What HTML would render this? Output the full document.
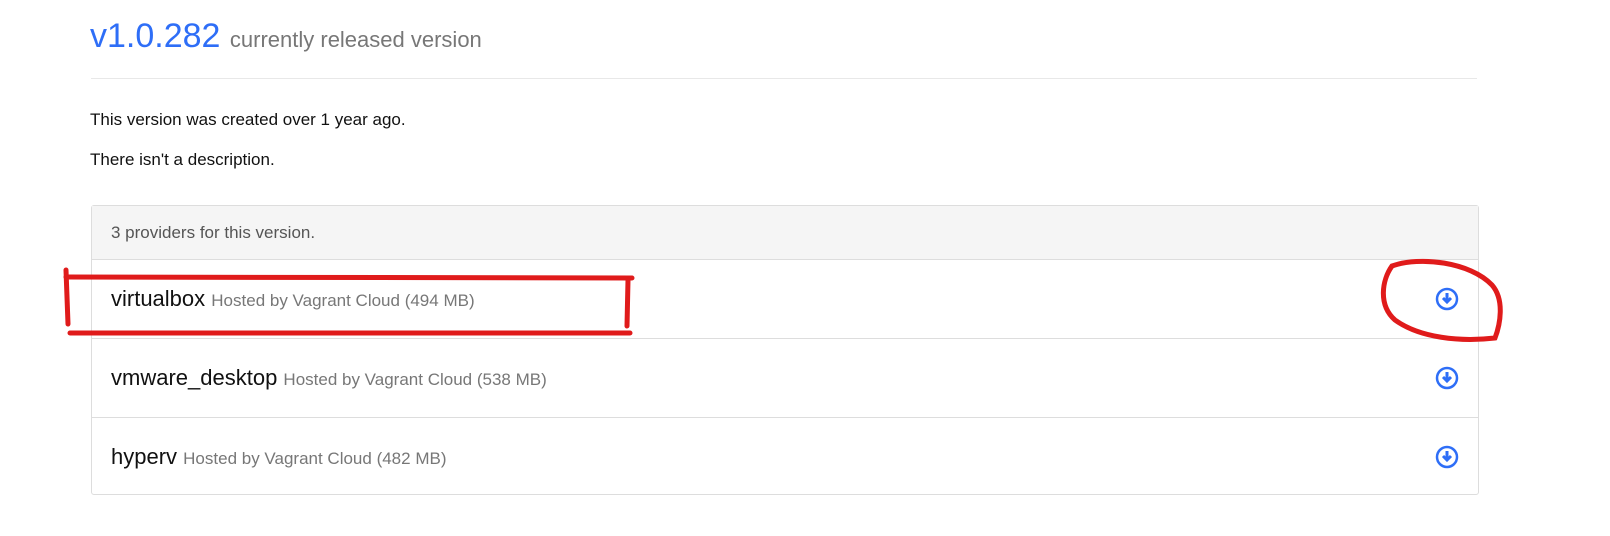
<!DOCTYPE html>
<html><head><style>
body{margin:0;width:1610px;height:536px;background:#fff;font-family:"Liberation Sans",sans-serif;position:relative;overflow:hidden}
.a{position:absolute;white-space:nowrap}
.panel{position:absolute;left:91px;top:205px;width:1386px;height:288px;border:1px solid #ddd;border-radius:3px}
.hd{height:53px;background:#f5f5f5;border-bottom:1px solid #ddd;color:#555;font-size:17px;line-height:53px;padding-left:19px}
.row{height:78px;border-bottom:1px solid #ddd;position:relative;padding-left:19px;line-height:78px;font-size:22px;color:#111}
.row:last-child{border-bottom:none}
.row span{font-size:17px;color:#777}
.row svg{position:absolute;right:19px;top:27px}
</style></head><body>
<div class="a" style="left:90px;top:17px;font-size:34px;color:#2e6ef7">v1.0.282 <span style="font-size:22px;color:#777">currently released version</span></div>
<div class="a" style="left:91px;top:78px;width:1386px;border-top:1px solid #e8e8e8"></div>
<div class="a" style="left:90px;top:110px;font-size:17px;color:#111">This version was created over 1 year ago.</div>
<div class="a" style="left:90px;top:150px;font-size:17px;color:#111">There isn't a description.</div>
<div class="panel">
<div class="hd">3 providers for this version.</div>
<div class="row">virtualbox <span>Hosted by Vagrant Cloud (494 MB)</span><svg width="24" height="24" viewBox="0 0 24 24"><circle cx="12" cy="12" r="10" fill="none" stroke="#2e6ef7" stroke-width="2.5"/><path d="M12 6v7M8 11l4 4 4-4" fill="none" stroke="#2e6ef7" stroke-width="3"/></svg></div>
<div class="row">vmware_desktop <span>Hosted by Vagrant Cloud (538 MB)</span><svg width="24" height="24" viewBox="0 0 24 24"><circle cx="12" cy="12" r="10" fill="none" stroke="#2e6ef7" stroke-width="2.5"/><path d="M12 6v7M8 11l4 4 4-4" fill="none" stroke="#2e6ef7" stroke-width="3"/></svg></div>
<div class="row">hyperv <span>Hosted by Vagrant Cloud (482 MB)</span><svg width="24" height="24" viewBox="0 0 24 24"><circle cx="12" cy="12" r="10" fill="none" stroke="#2e6ef7" stroke-width="2.5"/><path d="M12 6v7M8 11l4 4 4-4" fill="none" stroke="#2e6ef7" stroke-width="3"/></svg></div>
</div>
<svg class="a" style="left:0;top:0" width="1610" height="536">
<g fill="none" stroke="#e01b1b" stroke-width="5" stroke-linecap="round">
<path d="M66 270 L68 324"/>
<path d="M66 277 L632 278"/>
<path d="M628 280 L627 326"/>
<path d="M70 333 L630 333"/>
<path d="M1392 266 C1420 256 1470 262 1492 285 C1505 300 1500 325 1495 338 C1460 342 1420 338 1395 320 C1378 305 1382 280 1392 266 Z"/>
</g></svg>
</body></html>
